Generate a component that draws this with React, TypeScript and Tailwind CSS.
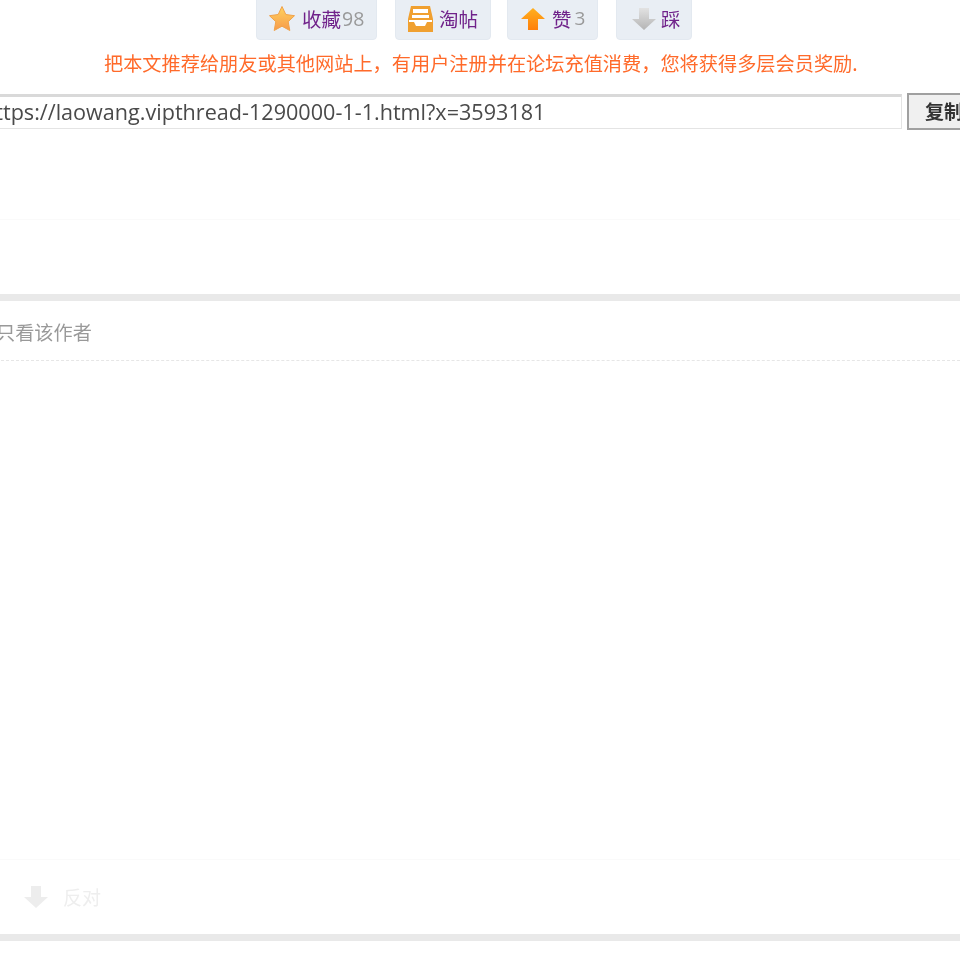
const cjk = "font-['Noto_Sans_CJK_SC','Noto_Sans',sans-serif]";

function StarIcon() {
  return (
    <svg viewBox="0 0 28 28" className="h-[28px] w-[28px]">
      <defs>
        <linearGradient id="star" x1="0" y1="0" x2="0" y2="1">
          <stop offset="0" stopColor="#ffd35c" />
          <stop offset="1" stopColor="#f79a4b" />
        </linearGradient>
      </defs>
      <path
        d="M14 1.5l3.8 8 8.7 1.2-6.3 6 1.6 8.8L14 21.2l-7.8 4.3 1.6-8.8-6.3-6 8.7-1.2z"
        fill="url(#star)"
        stroke="#f0a24a"
        strokeWidth="1"
        strokeLinejoin="round"
      />
    </svg>
  );
}

function TrayIcon() {
  return (
    <svg viewBox="0 0 25 26" className="h-[26px] w-[25px]">
      <path d="M3 0h19l3 13v13H0V13z" fill="#f0a030" />
      <rect x="5" y="3" width="15" height="4" fill="#fff" />
      <rect x="4" y="9" width="17" height="3" fill="#fff" />
      <path d="M1 14h23v2h-5l-2 4H8l-2-4H1z" fill="#fff" />
    </svg>
  );
}

function ArrowIcon({ from, to, id }: { from: string; to: string; id: string }) {
  return (
    <svg viewBox="0 0 24 22" width={24} height={22}>
      <defs>
        <linearGradient id={id} x1="0" y1="0" x2="0" y2="1">
          <stop offset="0" stopColor={from} />
          <stop offset="1" stopColor={to} />
        </linearGradient>
      </defs>
      <path d="M12 0l12 11h-7v11H7V11H0z" fill={`url(#${id})`} />
    </svg>
  );
}

function ActionButton({ children, className }: { children: React.ReactNode; className: string }) {
  return (
    <div className={`flex h-[52px] items-center rounded-b-[4px] border border-[#e3e9f0] bg-[#e9eef4] pt-[9px] ${className}`}>
      {children}
    </div>
  );
}

export default function App() {
  return (
    <div className={`flex h-[960px] w-[960px] flex-col overflow-hidden bg-white blur-[0.4px] ${cjk}`}>
      {/* share buttons */}
      <div className="-mt-[12px] flex h-[52px] shrink-0 pl-[256px]">
        <ActionButton className="w-[121px] pl-[11px]">
          <StarIcon />
          <span className="ml-[6px] text-[19.5px] text-[#70228a]">收藏</span>
          <span className="ml-[1px] font-['Open_Sans',sans-serif] text-[19.5px] text-[#999]">98</span>
        </ActionButton>
        <ActionButton className="ml-[18px] w-[96px] pl-[12px]">
          <TrayIcon />
          <span className="ml-[6px] text-[19.5px] text-[#70228a]">淘帖</span>
        </ActionButton>
        <ActionButton className="ml-[16px] w-[91px] pl-[13px]">
          <ArrowIcon id="up" from="#ffb01f" to="#ff7f0a" />
          <span className="ml-[7px] text-[19.5px] text-[#70228a]">赞</span>
          <span className="ml-[3px] font-['Open_Sans',sans-serif] text-[19px] text-[#999]">3</span>
        </ActionButton>
        <ActionButton className="ml-[18px] w-[76px] pl-[15px]">
          <span className="rotate-180">
            <ArrowIcon id="down" from="#b4b4b4" to="#e2e2e2" />
          </span>
          <span className="ml-[5px] text-[19.5px] text-[#70228a]">踩</span>
        </ActionButton>
      </div>

      {/* invite line */}
      <p className="mt-[9px] h-[28px] pl-[104px] text-[19.2px] leading-[28px] whitespace-nowrap text-[#ff6a2a]">
        把本文推荐给朋友或其他网站上，有用户注册并在论坛充值消费，您将获得多层会员奖励.
      </p>

      {/* referral url */}
      <div className="mt-[16px] flex h-[37px] shrink-0">
        <div className="mt-[1px] -ml-[20px] flex h-[35px] w-[922px] shrink-0 items-center border border-t-[3px] border-[#e4e4e4] border-t-[#d9d9d9] bg-white pl-[1px] font-['Open_Sans',sans-serif] text-[21.6px] whitespace-nowrap text-[#4a4a4a]">
          https://laowang.vipthread-1290000-1-1.html?x=3593181
        </div>
        <div className="ml-[5px] flex h-[37px] w-[80px] shrink-0 items-center border-2 border-[#a0a0a0] bg-[#f0f0f0] pl-[16px] text-[19px] font-bold whitespace-nowrap text-[#333]">
          复制
        </div>
      </div>

      <div className="mt-[89px] h-px shrink-0 bg-[#fafafa]" />
      <div className="mt-[74px] h-[7px] shrink-0 bg-[#e9e9e9]" />

      {/* post header */}
      <div className="-ml-[4px] flex h-[60px] shrink-0 items-center border-b border-dashed border-[#e6e6e6] pt-[3px] text-[19.2px] whitespace-nowrap text-[#999]">
        只看该作者
      </div>

      <div className="mt-[498px] h-px shrink-0 bg-[#fafafa]" />

      {/* vote row */}
      <div className="flex h-[74px] shrink-0 items-center pl-[24px]">
        <span className="rotate-180">
          <ArrowIcon id="against" from="#ededed" to="#ededed" />
        </span>
        <span className="ml-[15px] text-[19px] text-[#eeeeee]">反对</span>
      </div>

      <div className="h-[7px] shrink-0 bg-[#e9e9e9]" />
    </div>
  );
}
